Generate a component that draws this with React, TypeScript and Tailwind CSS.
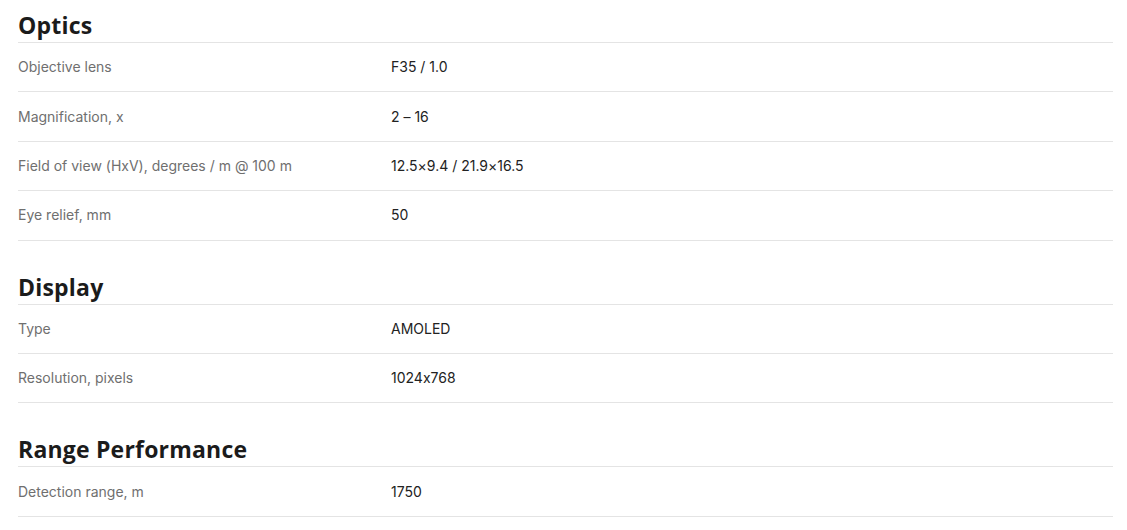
type Spec = { label: string; value: string };

const sections: { title: string; specs: Spec[] }[] = [
  {
    title: "Optics",
    specs: [
      { label: "Objective lens", value: "F35 / 1.0" },
      { label: "Magnification, x", value: "2 – 16" },
      { label: "Field of view (HxV), degrees / m @ 100 m", value: "12.5×9.4 / 21.9×16.5" },
      { label: "Eye relief, mm", value: "50" },
    ],
  },
  {
    title: "Display",
    specs: [
      { label: "Type", value: "AMOLED" },
      { label: "Resolution, pixels", value: "1024x768" },
    ],
  },
  {
    title: "Range Performance",
    specs: [{ label: "Detection range, m", value: "1750" }],
  },
];

function SpecRow({ spec }: { spec: Spec }) {
  return (
    <div className="flex items-center h-[49.4px] border-b border-[#e4e4e4] text-[14px] pb-[1px]">
      <div className="w-[373px] shrink-0 text-[#6f6f6f]">{spec.label}</div>
      <div className="text-[#222222]">{spec.value}</div>
    </div>
  );
}

export default function App() {
  return (
    <div
      className="bg-white min-h-[530px] pl-[18px] pr-[14px] pt-[11px] [font-feature-settings:'calt'_0]"
      style={{ fontFamily: "Inter, 'Noto Sans', sans-serif" }}
    >
      {sections.map((section, i) => (
        <section key={section.title} className={i > 0 ? "mt-8" : ""}>
          <h2
            className="h-8 leading-7 text-[23px] font-bold text-[#1b1b1b] border-b border-[#e4e4e4] tracking-[0.2px]"
            style={{ fontFamily: "'Open Sans', 'DejaVu Sans', sans-serif" }}
          >
            {section.title}
          </h2>
          {section.specs.map(spec => (
            <SpecRow key={spec.label} spec={spec} />
          ))}
        </section>
      ))}
    </div>
  );
}
